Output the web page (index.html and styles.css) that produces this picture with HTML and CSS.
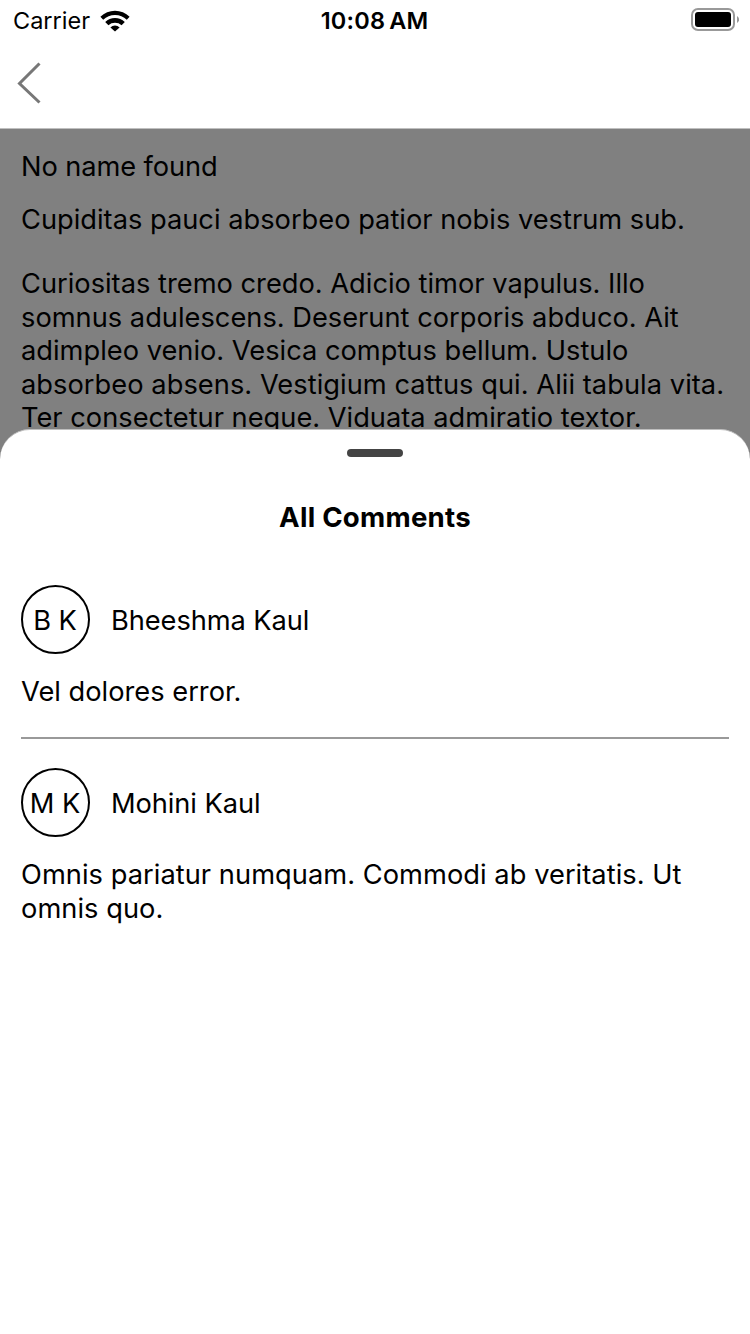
FILE: index.html
```html
<!DOCTYPE html>
<html lang="en">
<head>
<meta charset="utf-8">
<title>All Comments</title>
<link rel="stylesheet" href="styles.css">
</head>
<body>
<header class="status">
  <div class="carrier"><span class="carrier-name">Carrier</span>
    <svg class="wifi" width="30" height="22" viewBox="0 0 30 22"><path d="M15 21.5 L10.4 17.4 A6.6 6.6 0 0 1 19.6 17.4 Z"/><path d="M5.2 12 A14 14 0 0 1 24.8 12 L21.6 15.2 A10 10 0 0 0 8.4 15.2 Z"/><path d="M.4 6.8 A20.8 20.8 0 0 1 29.6 6.8 L26.8 9.8 A17 17 0 0 0 3.2 9.8 Z"/></svg>
  </div>
  <div class="time">10:08<span class="meridiem">AM</span></div>
  <svg class="battery" width="48" height="24" viewBox="0 0 48 24"><rect x="1" y="1" width="42" height="21" rx="6" fill="none" stroke="#999" stroke-width="2"/><rect x="4" y="4" width="36" height="15" rx="3"/><path d="M46 8v7a4 4 0 0 0 0-7z" fill="#999"/></svg>
</header>
<nav class="nav"><svg class="back" width="26" height="42" viewBox="0 0 26 42"><path d="M22.5 1.5 2.5 21.5 22.5 40.5"/></svg></nav>
<main class="post">
  <p class="author">No name found</p>
  <p class="title">Cupiditas pauci absorbeo patior nobis vestrum sub.</p>
  <p class="body">Curiositas tremo credo. Adicio timor vapulus. Illo<br>somnus adulescens. Deserunt corporis abduco. Ait<br>adimpleo venio. Vesica comptus bellum. Ustulo<br><span class="wide">absorbeo absens. Vestigium cattus qui. Alii tabula vita.</span><br>Ter consectetur neque. Viduata admiratio textor.</p>
</main>
<section class="sheet">
  <div class="handle"></div>
  <h1 class="heading">All Comments</h1>
  <article class="comment first">
    <div class="user"><span class="avatar">B K</span><span class="name">Bheeshma Kaul</span></div>
    <p class="text">Vel dolores error.</p>
  </article>
  <article class="comment">
    <div class="user"><span class="avatar">M K</span><span class="name">Mohini Kaul</span></div>
    <p class="text long">Omnis pariatur numquam. Commodi ab veritatis. Ut<br>omnis quo.</p>
  </article>
</section>
</body>
</html>
```
FILE: styles.css
```css
* { box-sizing: border-box; margin: 0; }
body { width: 750px; height: 1334px; overflow: hidden; display: flex; flex-direction: column; background: #808080; color: #000; font: 27.25px/33.4px Inter, sans-serif; }
.status { height: 40px; flex: none; display: grid; grid-template-columns: 1fr auto 1fr; align-items: center; background: #fff; font-size: 23.5px; padding: 0 11px 0 13px; }
.carrier { display: flex; align-items: center; gap: 9.5px; padding-top: 1px; }
.time { font-weight: 600; letter-spacing: .2px; padding: 2px 3px 0 0; }
.meridiem { margin-left: 4px; }
.battery { justify-self: end; }
.nav { height: 89px; flex: none; background: #fff; padding: 22px 17px; border-bottom: 1px solid #bfbfbf; }
.back { display: block; fill: none; stroke: #777; stroke-width: 3; }
.post { height: 300px; flex: none; padding: 21px 21px 0; white-space: nowrap; }
.author { letter-spacing: -.1px; }
.title { margin-top: 20px; }
.body { margin-top: 30.5px; }
.wide { letter-spacing: .04px; }
.sheet { flex: 1; background: #fff; border-top: 1px solid #bfbfbf; border-radius: 30px 30px 0 0; padding: 19px 21px; }
.handle { width: 56px; height: 8px; border-radius: 4px; background: #444; margin: 0 auto; }
.heading { font-size: 27.6px; line-height: 34px; font-weight: 700; letter-spacing: .25px; text-align: center; margin-top: 43px; }
.comment { padding-top: 29px; }
.first { padding-top: 51px; height: 205px; border-bottom: 2px solid #999; }
.user { display: flex; align-items: center; gap: 21px; }
.avatar { width: 69px; height: 69px; border: 2px solid #000; border-radius: 50%; display: flex; align-items: center; justify-content: center; white-space: nowrap; letter-spacing: -.1px; padding: 1px 1px 0 0; }
.avatar, .name { line-height: 33px; }
.name { padding-top: 1px; letter-spacing: -.08px; }
.text { margin-top: 20.5px; }
.long { letter-spacing: .04px; line-height: 34px; }
```
